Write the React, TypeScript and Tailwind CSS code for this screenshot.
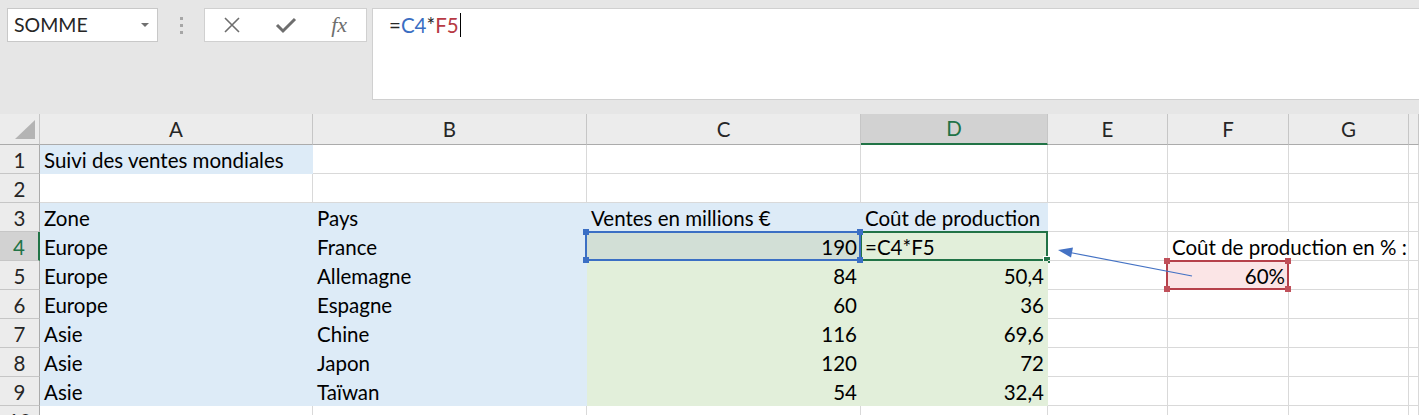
import React from "react";

type Fill = "none" | "blue" | "green" | "sel" | "pink";
type CellDef = {
  t?: string;
  right?: boolean;
  fill?: Fill;
  noRight?: boolean;
  overlay?: "blue" | "green" | "red";
};

const fillClass: Record<Fill, string> = {
  none: "border-[#d9d9d9]",
  blue: "bg-[#ddebf7] border-[#ddebf7]",
  green: "bg-[#e2efda] border-[#e2efda]",
  sel: "bg-[#d2dfd6] border-[#d2dfd6]",
  pink: "bg-[#fbe5e6] border-[#fbe5e6]",
};

const E: CellDef = {};

const rows: CellDef[][] = [
  [{ t: "Suivi des ventes mondiales", fill: "blue" }, E, E, E, E, E, E, E],
  [E, E, E, E, E, E, E, E],
  [
    { t: "Zone", fill: "blue" },
    { t: "Pays", fill: "blue" },
    { t: "Ventes en millions €", fill: "blue" },
    { t: "Coût de production", fill: "blue" },
    E,
    E,
    E,
    E,
  ],
  [
    { t: "Europe", fill: "blue" },
    { t: "France", fill: "blue" },
    { t: "190", right: true, fill: "sel", overlay: "blue" },
    { t: "=C4*F5", fill: "green", overlay: "green" },
    E,
    { t: "Coût de production en % :", noRight: true },
    E,
    E,
  ],
  [
    { t: "Europe", fill: "blue" },
    { t: "Allemagne", fill: "blue" },
    { t: "84", right: true, fill: "green" },
    { t: "50,4", right: true, fill: "green" },
    E,
    { t: "60%", right: true, fill: "pink", overlay: "red" },
    E,
    E,
  ],
  [
    { t: "Europe", fill: "blue" },
    { t: "Espagne", fill: "blue" },
    { t: "60", right: true, fill: "green" },
    { t: "36", right: true, fill: "green" },
    E,
    E,
    E,
    E,
  ],
  [
    { t: "Asie", fill: "blue" },
    { t: "Chine", fill: "blue" },
    { t: "116", right: true, fill: "green" },
    { t: "69,6", right: true, fill: "green" },
    E,
    E,
    E,
    E,
  ],
  [
    { t: "Asie", fill: "blue" },
    { t: "Japon", fill: "blue" },
    { t: "120", right: true, fill: "green" },
    { t: "72", right: true, fill: "green" },
    E,
    E,
    E,
    E,
  ],
  [
    { t: "Asie", fill: "blue" },
    { t: "Taïwan", fill: "blue" },
    { t: "54", right: true, fill: "green" },
    { t: "32,4", right: true, fill: "green" },
    E,
    E,
    E,
    E,
  ],
  [E, E, E, E, E, E, E, E],
];

const colLetters = ["A", "B", "C", "D", "E", "F", "G", ""];

function Handle({ pos, color }: { pos: string; color: string }) {
  return <span className={`absolute w-[6px] h-[6px] ${pos} ${color}`} />;
}

function Overlay({ kind }: { kind: "blue" | "green" | "red" }) {
  if (kind === "green") {
    return (
      <div className="absolute left-[-1px] top-[-1px] right-[-1px] bottom-[-1px] border-2 border-[#217346] pointer-events-none">
        <span className="absolute right-[-5px] bottom-[-5px] w-[8px] h-[8px] bg-[#217346] border border-white" />
      </div>
    );
  }
  const border = kind === "blue" ? "border-[#3b6fc4]" : "border-[#b5414b]";
  const bg = kind === "blue" ? "bg-[#3b6fc4]" : "bg-[#c0505a]";
  return (
    <div
      className={`absolute left-[-2px] top-[-1px] right-[-1px] bottom-[-1px] border-2 ${border} pointer-events-none z-10`}
    >
      <Handle pos="left-[-4px] top-[-4px]" color={bg} />
      <Handle pos="right-[-4px] top-[-4px]" color={bg} />
      <Handle pos="left-[-4px] bottom-[-4px]" color={bg} />
      <Handle pos="right-[-4px] bottom-[-4px]" color={bg} />
    </div>
  );
}

function Cell({ c }: { c: CellDef }) {
  const fill = fillClass[c.fill ?? "none"];
  const rightBorder = c.noRight ? "border-r-transparent" : "";
  return (
    <div
      className={`relative h-[29px] border-r border-b ${fill} ${rightBorder} flex items-center pt-[2px] ${
        c.right ? "justify-end pr-[3px]" : "justify-start pl-[4px]"
      }`}
    >
      {c.t ? (
        <span className="whitespace-nowrap text-[20.5px] leading-none text-black relative z-[1]">
          {c.t}
        </span>
      ) : null}
      {c.overlay ? <Overlay kind={c.overlay} /> : null}
    </div>
  );
}

function Toolbar() {
  return (
    <div className="h-[114px] bg-[#e6e6e6] flex items-start pt-[8px] pl-[7px]">
      <div className="w-[151px] h-[34px] bg-white border border-[#c8c8c8] flex items-center pl-[6px] pr-[8px]">
        <span className="text-[19.5px] text-[#262626]">SOMME</span>
        <span className="ml-auto w-0 h-0 border-l-[4px] border-r-[4px] border-t-[4px] border-l-transparent border-r-transparent border-t-[#707070]" />
      </div>
      <div className="w-[46px] h-[34px] flex flex-col items-center justify-center gap-[4px]">
        <span className="w-[3px] h-[3px] bg-[#a6a6a6]" />
        <span className="w-[3px] h-[3px] bg-[#a6a6a6]" />
        <span className="w-[3px] h-[3px] bg-[#a6a6a6]" />
      </div>
      <div className="w-[163px] h-[34px] bg-white border border-[#d0d0d0] flex items-center">
        <div className="flex-1 flex justify-center">
          <svg width="18" height="18" viewBox="0 0 18 18">
            <path d="M2 2 L16 16 M16 2 L2 16" stroke="#6e6e6e" strokeWidth="1.6" fill="none" />
          </svg>
        </div>
        <div className="flex-1 flex justify-center">
          <svg width="22" height="18" viewBox="0 0 22 18">
            <path d="M2 9 L8 15 L20 3" stroke="#6e6e6e" strokeWidth="3" fill="none" />
          </svg>
        </div>
        <div className="flex-1 flex justify-center">
          <span className="font-['Liberation_Serif',serif] italic text-[22px] text-[#6e6e6e] leading-none">
            fx
          </span>
        </div>
      </div>
      <div className="ml-[5px] flex-1 h-[92px] bg-white border border-[#d0d0d0] border-r-0 pl-[16px] pt-[4px]">
        <div className="flex items-center text-[20.5px] leading-[24px]">
          <span className="text-[#262626]">=</span>
          <span className="text-[#3a6ec2]">C4</span>
          <span className="text-[#262626]">*</span>
          <span className="text-[#b73a44]">F5</span>
          <span className="w-[1px] h-[24px] bg-black ml-[1px]" />
        </div>
      </div>
    </div>
  );
}

export default function App() {
  return (
    <div className="w-[1419px] h-[415px] overflow-hidden bg-white font-[Lato,sans-serif]">
      <Toolbar />
      <div className="relative grid grid-cols-[40px_273px_274px_274px_187px_120px_121px_120px_1fr]">
        <div className="relative h-[31px] bg-[#ececec] border-r border-b border-r-[#c6c6c6] border-b-[#ababab]">
          <svg className="absolute left-0 top-0" width="40" height="31" viewBox="0 0 40 31">
            <polygon points="15,25 35,25 35,6" fill="#b4b4b4" />
          </svg>
        </div>
        {colLetters.map((l, i) =>
          l === "D" ? (
            <div
              key={i}
              className="h-[31px] bg-[#d2d2d2] border-r border-r-[#c6c6c6] border-b-2 border-b-[#217346] flex items-center justify-center text-[20.5px] text-[#217346]"
            >
              {l}
            </div>
          ) : (
            <div
              key={i}
              className="h-[31px] bg-[#ececec] border-r border-b border-r-[#c6c6c6] border-b-[#ababab] flex items-center justify-center text-[20.5px] text-[#262626]"
            >
              {l}
            </div>
          )
        )}
        {rows.map((r, ri) => (
          <React.Fragment key={ri}>
            {ri === 3 ? (
              <div className="h-[29px] pt-[2px] bg-[#d2d2d2] border-r-2 border-r-[#217346] border-b border-b-[#c6c6c6] flex items-center justify-center text-[20.5px] text-[#217346]">
                {ri + 1}
              </div>
            ) : (
              <div className="h-[29px] pt-[2px] bg-[#ececec] border-r border-b border-r-[#ababab] border-b-[#c6c6c6] flex items-center justify-center text-[20.5px] text-[#262626]">
                {ri + 1}
              </div>
            )}
            {r.map((c, ci) => (
              <Cell key={ci} c={c} />
            ))}
          </React.Fragment>
        ))}
        <svg
          className="absolute left-0 top-0 pointer-events-none z-20"
          width="1419"
          height="301"
          viewBox="0 0 1419 301"
        >
          <line x1="1192" y1="162" x2="1070" y2="138.5" stroke="#4472c4" strokeWidth="1.2" />
          <polygon points="1058,136 1073,133.5 1071,143.5" fill="#4472c4" />
        </svg>
      </div>
    </div>
  );
}
